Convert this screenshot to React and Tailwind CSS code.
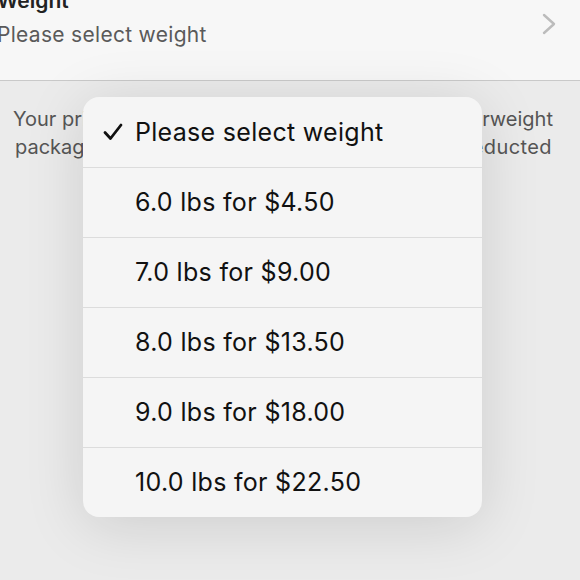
const options = [
  'Please select weight',
  '6.0 lbs for $4.50',
  '7.0 lbs for $9.00',
  '8.0 lbs for $13.50',
  '9.0 lbs for $18.00',
  '10.0 lbs for $22.50',
];

export default function App() {
  return (
    <div className="relative w-[580px] h-[580px] overflow-hidden bg-[#ebebeb] font-['Inter','Liberation_Sans',sans-serif]">
      {/* Field row */}
      <div className="h-[81px] bg-[#f7f7f7] border-b border-[#c9c9c9] flex items-start justify-between pr-[24px]">
        <div className="-mt-[11px] -ml-[3px]">
          <div className="text-[21px] leading-[24px] font-semibold text-[#222]">Weight</div>
          <div className="text-[21px] leading-[26px] tracking-[0.3px] text-[#5a5a5a] mt-[9px]">Please select weight</div>
        </div>
        <svg className="mt-[13px]" width="14" height="22" viewBox="0 0 14 22" fill="none">
          <path d="M2 2 L12 11 L2 20" stroke="#bcbcbc" strokeWidth="2.4" strokeLinecap="round" strokeLinejoin="round" />
        </svg>
      </div>

      {/* Note text behind the menu */}
      <div className="pt-[24px] pl-[13px] pr-[27px] text-[20px] leading-[28px] text-[#555]">
        <div className="flex justify-between whitespace-nowrap">
          <span>Your price includes a</span>
          <span>surcharge for overweight</span>
        </div>
        <div className="flex justify-between whitespace-nowrap pl-[2px] pr-[1px]">
          <span>packages, which</span>
          <span className="tracking-[0.4px]">will be deducted</span>
        </div>
      </div>

      {/* Popup menu */}
      <div className="absolute left-[83px] top-[97px] w-[399px] rounded-[16px] bg-[#f5f5f5] shadow-[0_8px_60px_rgba(0,0,0,0.13)] overflow-hidden">
        {options.map((opt, i) => (
          <div
            key={opt}
            className={`h-[70px] flex items-center text-[25px] tracking-[0.3px] text-[#111] ${i > 0 ? 'border-t border-[#dcdcdc]' : ''}`}
          >
            <div className="w-[52px] flex justify-end pr-[12px]">
              {i === 0 && (
                <svg width="20" height="18" viewBox="0 0 20 18" fill="none">
                  <path d="M2 9.5 L7.5 15.5 L18 2" stroke="#111" strokeWidth="2.8" strokeLinecap="round" strokeLinejoin="round" />
                </svg>
              )}
            </div>
            <span className="mt-[1px]">{opt}</span>
          </div>
        ))}
      </div>
    </div>
  );
}
